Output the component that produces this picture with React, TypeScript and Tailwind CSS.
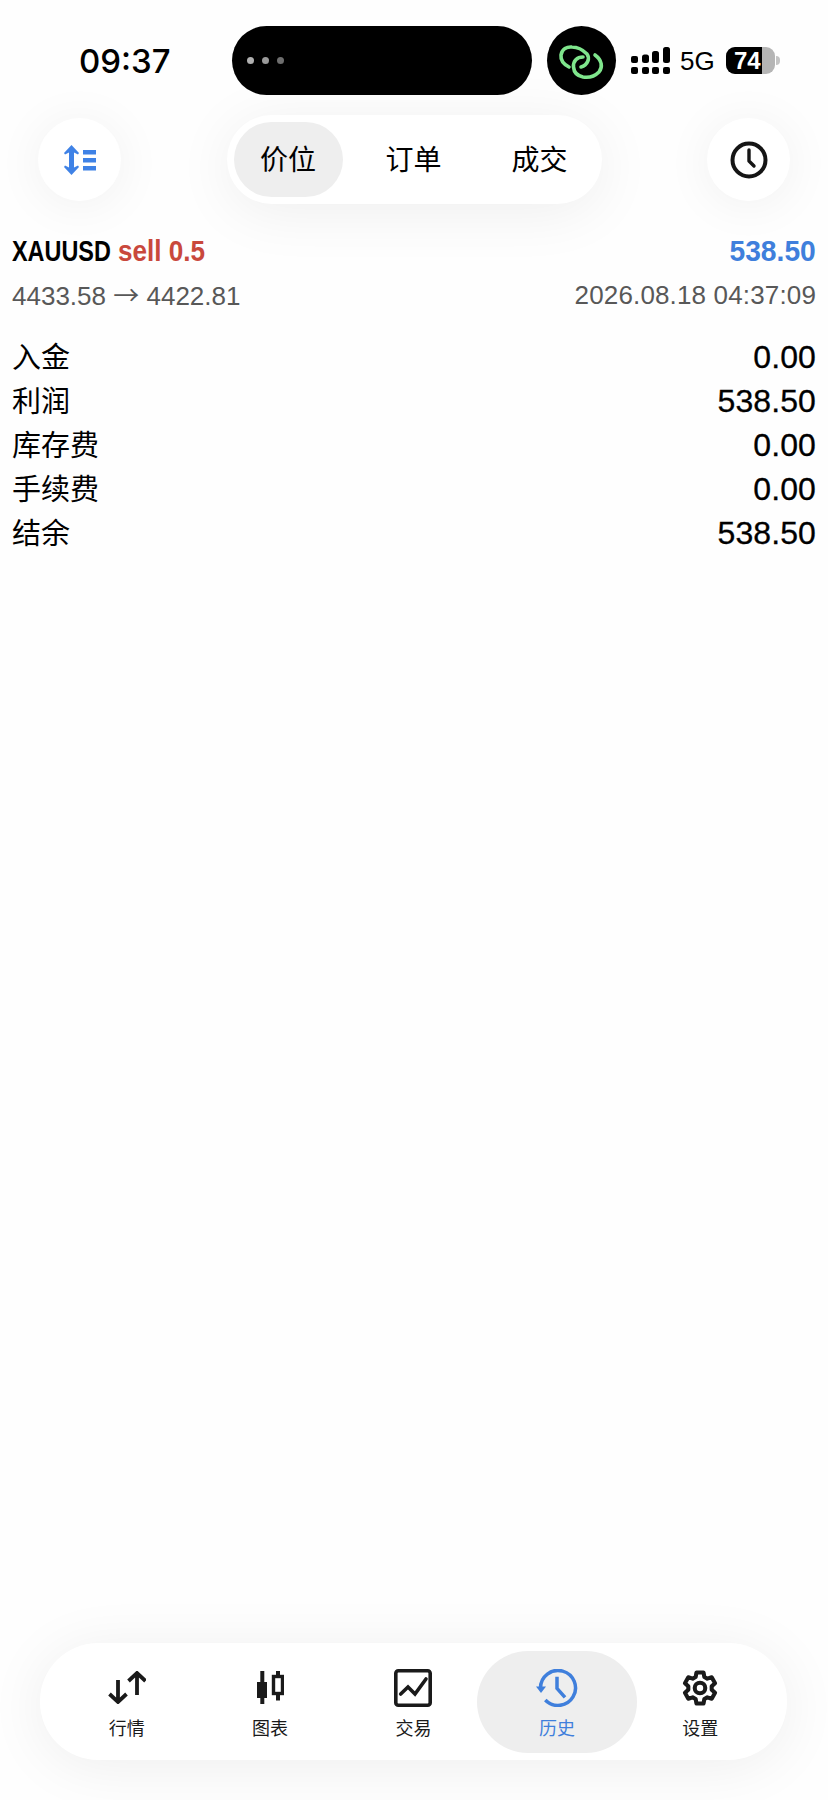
const cjk = '"Liberation Sans", "Noto Sans CJK SC", sans-serif';

function SignalIcon() {
  return (
    <svg width="40" height="28" viewBox="0 0 40 28" fill="#000">
      <rect x="0" y="9" width="7" height="7" rx="2" />
      <rect x="11" y="7.500" width="7" height="8.500" rx="2.500" />
      <rect x="21" y="4" width="7" height="12" rx="2.500" />
      <rect x="32" y="0" width="7" height="16" rx="2.500" />
      <rect x="0" y="20" width="7" height="7" rx="2" />
      <rect x="11" y="20" width="7" height="7" rx="2" />
      <rect x="21" y="20" width="7" height="7" rx="2" />
      <rect x="32" y="20" width="7" height="7" rx="2" />
    </svg>
  );
}

function LinkIcon() {
  return (
    <svg width="69" height="69" viewBox="2 2 69 69" fill="none" stroke="#7fe58c" strokeWidth="3.600" strokeLinecap="round">
      <path d="M24 43 C18 40 15.500 36 16 31 C17 25 22 22.500 27 23 C33 23 38 26 42 30 C45 34 43 41 36 43" />
      <path d="M38 33 C32 33 28 37 28.500 43 C29 49 33 52 38 53 C44 54 50 52 54 48 C58 43 57 36 50 31" />
    </svg>
  );
}

function SortListIcon() {
  return (
    <svg width="32" height="30" viewBox="0 0 32 30" fill="#3f82e6">
      <path d="M7.500 0 L15 8 L14 9.500 L10 7.500 V22.500 L14 20.500 L15 22 L7.500 30 L0 22 L1 20.500 L5 22.500 V7.500 L1 9.500 L0 8 Z" />
      <rect x="19" y="5" width="13" height="4.500" />
      <rect x="19" y="13" width="13" height="4.500" />
      <rect x="19" y="21" width="13" height="4.500" />
    </svg>
  );
}

function ClockIcon() {
  return (
    <svg width="38" height="38" viewBox="0 0 38 38" fill="none" stroke="#151515" strokeWidth="4" strokeLinecap="round" strokeLinejoin="round">
      <circle cx="19" cy="19" r="16.500" />
      <path d="M19 9 V20 L24 25" strokeWidth="3.400" />
    </svg>
  );
}

function QuotesIcon() {
  return (
    <svg width="38" height="33" viewBox="0 0 38 33" fill="none" stroke="#1a1a1a" strokeWidth="3.800">
      <path d="M10 9 V31 M1.500 23 L10 31 L18.500 23" />
      <path d="M29 24 V2 M20.500 10 L29 2 L37.500 10" />
    </svg>
  );
}

function CandleIcon() {
  return (
    <svg width="27" height="33" viewBox="0 0 27 33" fill="#1a1a1a">
      <rect x="3.300" y="0" width="4" height="33" />
      <rect x="0" y="11" width="10" height="16" />
      <rect x="19" y="0" width="4" height="5" />
      <rect x="19" y="23" width="4" height="6.500" />
      <rect x="16.500" y="5.500" width="9" height="17" fill="none" stroke="#1a1a1a" strokeWidth="3.400" />
    </svg>
  );
}

function TradeIcon() {
  return (
    <svg width="38" height="38" viewBox="0 0 38 38" fill="none" stroke="#1a1a1a" strokeWidth="3.600">
      <rect x="1.800" y="1.800" width="34.400" height="34.400" rx="2.500" />
      <path d="M6.700 25 L14 18 L21 25 L32 10" strokeLinecap="round" />
    </svg>
  );
}

function HistoryIcon() {
  return (
    <svg width="42" height="38" viewBox="0 0 42 38" fill="none" stroke="#3f7fdc" strokeWidth="3.500">
      <path d="M4.500 19 A17.500 17.500 0 1 1 9.300 31" />
      <path d="M0 17.500 H10 L5 24 Z" fill="#3f7fdc" stroke="none" />
      <path d="M21 7.700 V19.300 L29 28.300" />
    </svg>
  );
}

function GearIcon() {
  return (
    <svg width="38" height="38" viewBox="-1 -1 26 26" fill="none" stroke="#1a1a1a" strokeWidth="2.800" strokeLinejoin="round">
      <path d="M9.600 1.400 H14.400 L15 4.500 L17 5.600 L20 4.700 L22.300 8.700 L20 10.800 V13.200 L22.300 15.300 L20 19.300 L17 18.400 L15 19.500 L14.400 22.600 H9.600 L9 19.500 L7 18.400 L4 19.300 L1.700 15.300 L4 13.200 V10.800 L1.700 8.700 L4 4.700 L7 5.600 L9 4.500 Z" />
      <circle cx="12" cy="12" r="3.600" />
    </svg>
  );
}

const rows = [
  { label: '入金', value: '0.00' },
  { label: '利润', value: '538.50' },
  { label: '库存费', value: '0.00' },
  { label: '手续费', value: '0.00' },
  { label: '结余', value: '538.50' },
];

const tabs = [
  { label: '行情', icon: <QuotesIcon /> },
  { label: '图表', icon: <CandleIcon /> },
  { label: '交易', icon: <TradeIcon /> },
  { label: '历史', icon: <HistoryIcon />, active: true },
  { label: '设置', icon: <GearIcon /> },
];

export default function App() {
  return (
    <div className="flex h-[1800px] w-[828px] flex-col overflow-hidden bg-[#fefefe] text-black" style={{ fontFamily: cjk }}>
      {/* status bar */}
      <div className="mt-[26px] flex h-[69px] shrink-0 items-center">
        <span className="ml-[79px] w-[153px] pt-[2px] font-['Inter'] text-[33px] font-medium leading-none">09:37</span>
        <div className="flex h-[69px] w-[300px] items-center gap-2 rounded-[35px] bg-black pl-[15px]">
          <span className="size-[7px] rounded-full bg-[#b0b0b0]" />
          <span className="size-[7px] rounded-full bg-[#9a9a9a]" />
          <span className="size-[7px] rounded-full bg-[#6e6e6e]" />
        </div>
        <div className="ml-[15px] flex size-[69px] items-center justify-center rounded-full bg-black">
          <LinkIcon />
        </div>
        <div className="ml-[15px] flex items-center">
          <SignalIcon />
        </div>
        <span className="ml-[9px] text-[26px] leading-none">5G</span>
        <div className="ml-[11px] flex h-[27px] w-[49px] overflow-hidden rounded-[9px] bg-[#b5b5b5]">
          <div className="flex w-[36px] items-center justify-end bg-black pr-[1px] text-[24px] font-bold leading-none text-white">74</div>
        </div>
        <div className="ml-[1px] h-[9px] w-[4px] rounded-r-full bg-[#c4c4c4]" />
      </div>

      {/* header */}
      <div className="mt-[20px] flex h-[89px] shrink-0 items-center justify-between px-[38px]">
        <button className="flex size-[83px] items-center justify-center rounded-full bg-white shadow-[0_4px_50px_rgba(0,0,0,0.06)]">
          <SortListIcon />
        </button>
        <div className="flex h-[89px] w-[375px] items-center rounded-[45px] bg-white pl-[7px] text-[28px] shadow-[0_8px_60px_rgba(0,0,0,0.065)]">
          <div className="flex h-[75px] w-[109px] items-center justify-center rounded-[38px] bg-[#eeeeee] pt-[2px]">价位</div>
          <div className="flex h-[75px] w-[142px] items-center justify-center pt-[2px]">订单</div>
          <div className="flex h-[75px] w-[110px] items-center justify-center pt-[2px]">成交</div>
        </div>
        <button className="flex size-[83px] items-center justify-center rounded-full bg-white shadow-[0_4px_50px_rgba(0,0,0,0.06)]">
          <ClockIcon />
        </button>
      </div>

      {/* deal */}
      <div className="mt-[33px] flex h-[28px] shrink-0 items-center justify-between whitespace-nowrap px-[12px] text-[30px] font-bold leading-none">
        <div className="flex">
          <span className="inline-block w-[106px] origin-left scale-x-[0.78]">XAUUSD</span>
          <span className="inline-block origin-left scale-x-[0.87] text-[#c9483c]">sell 0.5</span>
        </div>
        <span className="inline-block origin-right scale-x-[0.94] text-[#3f7fdc]">538.50</span>
      </div>
      <div className="flex flex-col bg-[#fefefe] px-[12px] pt-[15px]">
        <div className="flex h-[30px] items-center justify-between text-[26px] leading-none text-[#585858]">
          <span>
            4433.58 <span className="font-['Noto_Sans_CJK_SC']">→</span> 4422.81
          </span>
          <span className="tracking-[0.15px]">2026.08.18 04:37:09</span>
        </div>
        <div className="mt-[25px] flex flex-col">
          {rows.map((row) => (
            <div key={row.label} className="flex h-[44px] items-center justify-between leading-none">
              <span className="pt-[2px] text-[29px]">{row.label}</span>
              <span className="text-[32px] tracking-[0.1px] [-webkit-text-stroke:0.3px_#000]">{row.value}</span>
            </div>
          ))}
        </div>
      </div>

      <div className="flex-1" />

      {/* bottom nav */}
      <div className="mb-[40px] ml-[40px] grid h-[117px] w-[747px] shrink-0 grid-cols-5 items-center rounded-[58px] bg-white px-[15px] shadow-[0_6px_60px_rgba(0,0,0,0.065)]">
        {tabs.map((tab) => (
          <div
            key={tab.label}
            className={`flex h-[102px] flex-col items-center gap-[11px] rounded-[51px] pt-[18px] ${tab.active ? '-mx-2 bg-[#eeeeee] text-[#3f7fdc]' : 'text-[#1a1a1a]'}`}
          >
            <div className="flex h-[38px] items-center justify-center">{tab.icon}</div>
            <span className="text-[18px] leading-[22px]">{tab.label}</span>
          </div>
        ))}
      </div>
    </div>
  );
}
